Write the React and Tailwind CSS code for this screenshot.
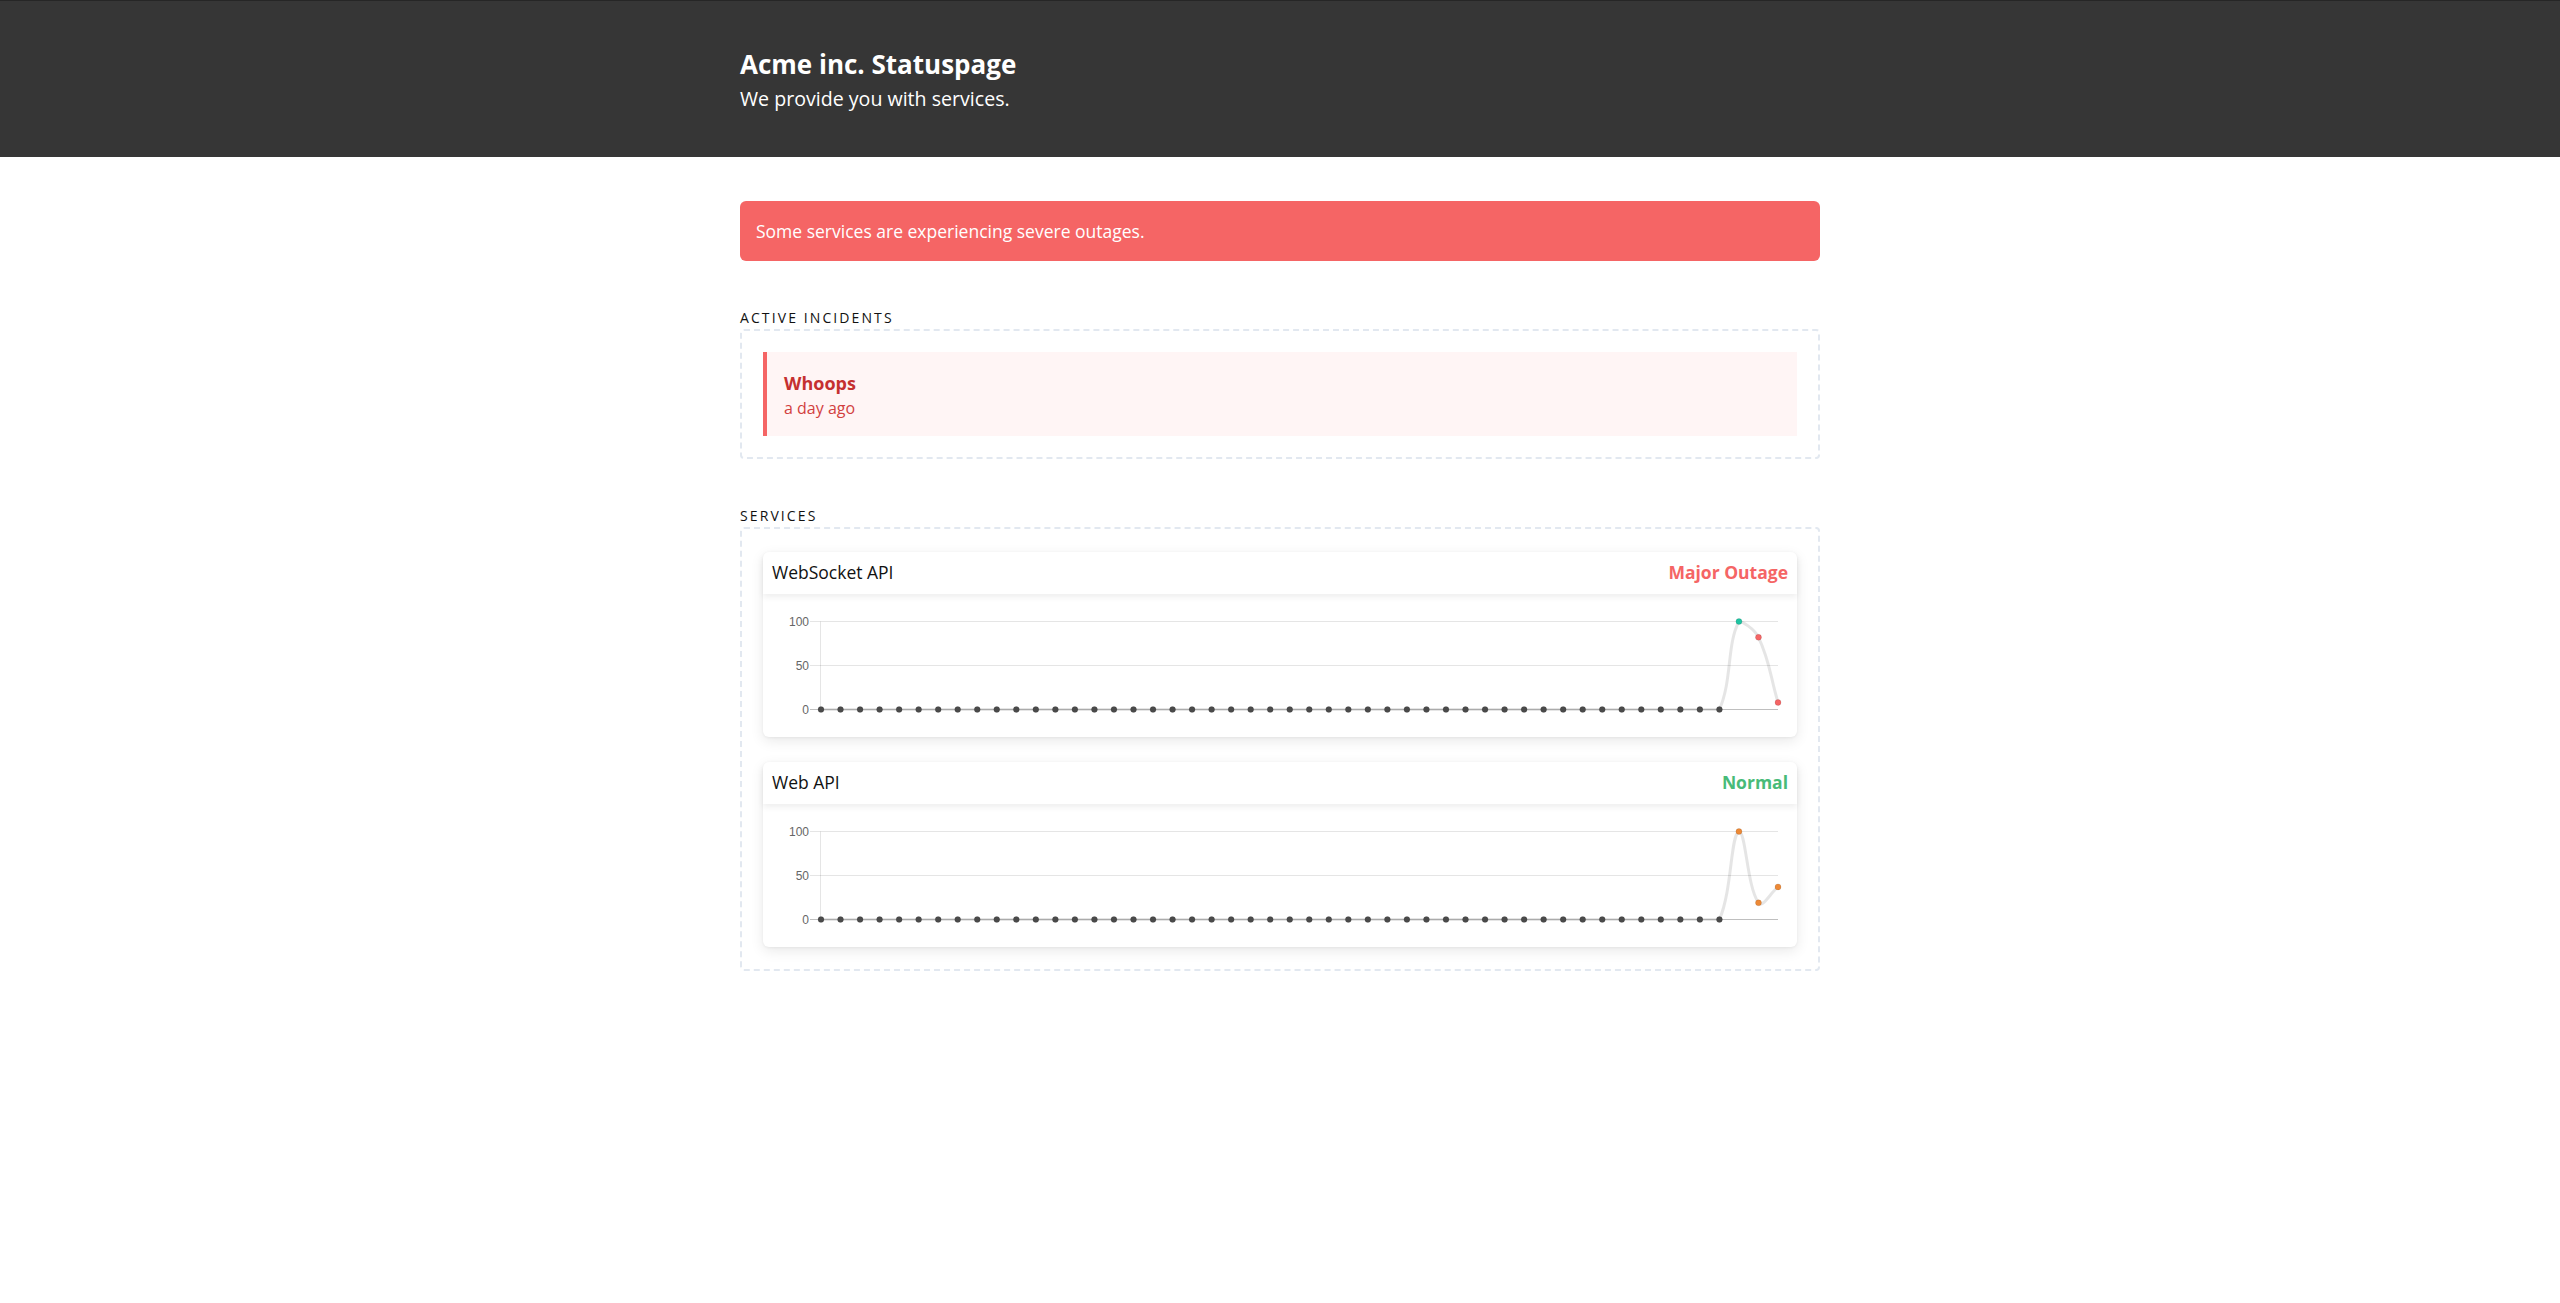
import React from "react";

const AREA = { left: 58, right: 1015, top: 27.5, bottom: 115.5 };
const N = 50;

function makePoints(data) {
  const step = (AREA.right - AREA.left) / (N - 1);
  return data.map((v, i) => ({
    x: AREA.left + i * step,
    y: AREA.bottom - v * ((AREA.bottom - AREA.top) / 100),
  }));
}

function clamp(v, a, b) {
  return Math.max(a, Math.min(b, v));
}

function buildPath(pts, t = 0.4) {
  const ctrl = pts.map((cur, i) => {
    const prev = pts[i - 1] || cur;
    const next = pts[i + 1] || cur;
    const d01 = Math.hypot(cur.x - prev.x, cur.y - prev.y);
    const d12 = Math.hypot(next.x - cur.x, next.y - cur.y);
    let s01 = d01 / (d01 + d12);
    let s12 = d12 / (d01 + d12);
    if (isNaN(s01)) s01 = 0;
    if (isNaN(s12)) s12 = 0;
    const fa = t * s01;
    const fb = t * s12;
    return {
      px: clamp(cur.x - fa * (next.x - prev.x), AREA.left, AREA.right),
      py: clamp(cur.y - fa * (next.y - prev.y), AREA.top, AREA.bottom),
      nx: clamp(cur.x + fb * (next.x - prev.x), AREA.left, AREA.right),
      ny: clamp(cur.y + fb * (next.y - prev.y), AREA.top, AREA.bottom),
    };
  });
  let d = `M ${pts[0].x} ${pts[0].y}`;
  for (let i = 1; i < pts.length; i++) {
    d += ` C ${ctrl[i - 1].nx} ${ctrl[i - 1].ny} ${ctrl[i].px} ${ctrl[i].py} ${pts[i].x} ${pts[i].y}`;
  }
  return d;
}

function Chart({ data, colors }) {
  const pts = makePoints(data);
  const path = buildPath(pts);
  const ticks = [
    { v: 100, y: 27.5 },
    { v: 50, y: 71.5 },
    { v: 0, y: 115.5 },
  ];
  return (
    <svg width="1034" height="143" className="block">
      {ticks.map((tk) => (
        <g key={tk.v}>
          <line
            x1="47"
            x2={AREA.right}
            y1={tk.y}
            y2={tk.y}
            stroke={tk.v === 0 ? "rgba(0,0,0,0.25)" : "rgba(0,0,0,0.1)"}
            strokeWidth="1"
          />
          <text
            x="46"
            y={tk.y + 4.3}
            textAnchor="end"
            fontFamily="'Liberation Sans', Arial, sans-serif"
            fontSize="12"
            fill="#666"
          >
            {tk.v}
          </text>
        </g>
      ))}
      <line x1="57.5" x2="57.5" y1="27.5" y2="115.5" stroke="rgba(0,0,0,0.1)" strokeWidth="1" />
      <path d={path} fill="none" stroke="rgba(0,0,0,0.1)" strokeWidth="3" />
      {pts.map((p, i) => (
        <circle
          key={i}
          cx={p.x}
          cy={p.y}
          r="3"
          fill={colors[i] || "#4a4a4a"}
          stroke="rgba(0,0,0,0.1)"
          strokeWidth="1"
        />
      ))}
    </svg>
  );
}

function zeros(n) {
  return Array.from({ length: n }, () => 0);
}

const services = [
  {
    name: "WebSocket API",
    status: "Major Outage",
    statusClass: "text-[#f56565]",
    data: [...zeros(47), 100, 82, 8],
    colors: { 47: "#1fc4a2", 48: "#f56565", 49: "#f56565" },
  },
  {
    name: "Web API",
    status: "Normal",
    statusClass: "text-[#48bb78]",
    data: [...zeros(47), 100, 19, 37],
    colors: { 47: "#ed8936", 48: "#ed8936", 49: "#ed8936" },
  },
];

export default function App() {
  return (
    <div
      className="min-h-screen bg-white text-[#1a1a1a]"
      style={{ fontFamily: "'Open Sans', 'Noto Sans', sans-serif" }}
    >
      <header className="h-[157px] bg-[#363636] border-t border-[#262626]">
        <div className="w-[1080px] mx-auto pt-[46px]">
          <h1 className="text-[26px] leading-[35px] font-bold text-white">Acme inc. Statuspage</h1>
          <p className="mt-[2px] text-[19.6px] leading-[30px] text-white">We provide you with services.</p>
        </div>
      </header>

      <main className="w-[1080px] mx-auto pt-[44px] pb-20">
        <div className="h-[60px] rounded-md bg-[#f56565] px-4 flex items-center text-white text-[17.5px] leading-[26px]">
          Some services are experiencing severe outages.
        </div>

        <section className="mt-[46px]">
          <h2 className="text-[14px] leading-[21px] tracking-[0.15em] uppercase text-[#111] mb-px">Active Incidents</h2>
          <div className="border-2 border-dashed border-[#e2e8f0] rounded p-[21px]">
            <div className="bg-[#fff5f5] border-l-4 border-[#f56565] pl-[17px] pt-[17.5px] pb-[16.5px]">
              <div className="text-[18px] leading-[27px] font-bold text-[#c53030]">Whoops</div>
              <div className="text-[16px] leading-[22.5px] text-[#d23f3f]">a day ago</div>
            </div>
          </div>
        </section>

        <section className="mt-[46px]">
          <h2 className="text-[14px] leading-[21px] tracking-[0.15em] uppercase text-[#111] mb-px">Services</h2>
          <div className="border-2 border-dashed border-[#e2e8f0] rounded px-[21px] pt-[23px] pb-[22px] flex flex-col gap-[25px]">
            {services.map((s) => (
              <div
                key={s.name}
                className="bg-white rounded-md shadow-[0_4px_14px_rgba(0,0,0,0.09),0_1px_3px_rgba(0,0,0,0.05)]"
              >
                <div className="h-[42px] px-[9px] flex items-center justify-between shadow-[0_3px_6px_rgba(0,0,0,0.07)] rounded-t-md relative">
                  <span className="text-[17.5px] leading-[27px] text-[#111]">{s.name}</span>
                  <span className={`text-[17.5px] leading-[27px] font-bold ${s.statusClass}`}>{s.status}</span>
                </div>
                <Chart data={s.data} colors={s.colors} />
              </div>
            ))}
          </div>
        </section>
      </main>
    </div>
  );
}
